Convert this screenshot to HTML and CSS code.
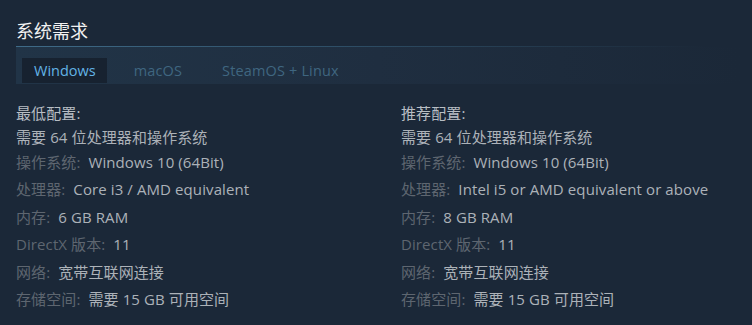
FILE: index.html
```
<!DOCTYPE html>
<html lang="zh-CN">
<head>
<meta charset="utf-8">
<link rel="stylesheet" href="styles.css">
</head>
<body>
<section class="sysreq">
  <h2 class="title">系统需求</h2>
  <div class="tabs">
    <div class="tab active">Windows</div>
    <div class="tab">macOS</div>
    <div class="tab">SteamOS + Linux</div>
  </div>
  <div class="cols">
    <ul class="col">
      <li class="head">最低配置:</li>
      <li class="req64">需要 64 位处理器和操作系统</li>
      <li><span class="k">操作系统:</span> Windows 10 (64Bit)</li>
      <li><span class="k">处理器:</span> Core i3 / AMD equivalent</li>
      <li><span class="k">内存:</span> 6 GB RAM</li>
      <li><span class="k">DirectX 版本:</span> 11</li>
      <li><span class="k">网络:</span> 宽带互联网连接</li>
      <li><span class="k">存储空间:</span> 需要 15 GB 可用空间</li>
    </ul>
    <ul class="col">
      <li class="head">推荐配置:</li>
      <li class="req64">需要 64 位处理器和操作系统</li>
      <li><span class="k">操作系统:</span> Windows 10 (64Bit)</li>
      <li><span class="k">处理器:</span> Intel i5 or AMD equivalent or above</li>
      <li><span class="k">内存:</span> 8 GB RAM</li>
      <li><span class="k">DirectX 版本:</span> 11</li>
      <li><span class="k">网络:</span> 宽带互联网连接</li>
      <li><span class="k">存储空间:</span> 需要 15 GB 可用空间</li>
    </ul>
  </div>
</section>
</body>
</html>
```
FILE: styles.css
```
html, body {
  margin: 0;
  padding: 0;
  background: #1b2838;
  height: 325px;
  overflow: hidden;
}
body {
  font-family: "Open Sans", "Noto Sans CJK SC", sans-serif;
  color: #acb2b8;
}
.sysreq {
  padding: 19px 12px 0 16px;
}
.title {
  margin: 0;
  font-size: 18px;
  font-weight: normal;
  line-height: 24px;
  color: #f2f2f2;
  padding-bottom: 3px;
  border-bottom: 1px solid transparent;
  border-image: linear-gradient(90deg, #3f6b88 0%, #2e4e66 45%, rgba(27,40,56,0) 95%) 1;
}
.tabs {
  display: flex;
  height: 36px;
  align-items: flex-end;
  padding: 0 0 1px 6px;
  background: linear-gradient(90deg, #213447 0%, #1f2e40 50%, #1b2838 100%);
}
.tab {
  height: 25px;
  line-height: 25px;
  padding: 0 13px;
  margin-right: 14px;
  font-size: 14.5px;
  color: #3f6680;
  letter-spacing: 0.15px;
}
.tab.active {
  background: #172230;
  color: #62b3e6;
  padding: 0 11px 0 12px;
  letter-spacing: 0;
}
.cols {
  display: grid;
  grid-template-columns: 385px 1fr;
  margin-top: 17px;
}
.col {
  list-style: none;
  margin: 0;
  padding: 0;
  font-size: 15px;
  letter-spacing: 0.1px;
}
.col li {
  line-height: 27.4px;
  white-space: nowrap;
}
.col li.head {
  line-height: 24px;
  color: #b8bec4;
}
.col li.req64 {
  line-height: 24px;
}
.k {
  color: #5e6670;
  margin-right: 4px;
}
```
